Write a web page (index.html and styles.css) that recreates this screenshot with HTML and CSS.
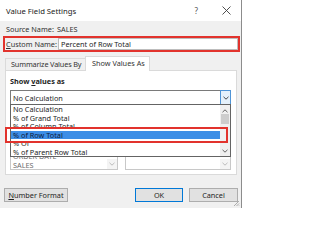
FILE: index.html
```html
<!DOCTYPE html>
<html>
<head>
<meta charset="utf-8">
<title>Value Field Settings</title>
<link rel="stylesheet" href="styles.css">
</head>
<body>
<div class="dialog">
  <div class="titlebar">
    <span class="title">Value Field Settings</span>
    <span class="help">?</span>
    <svg class="close" width="9" height="9" viewBox="0 0 9 9"><path d="M0.5 0.5 L8.5 8.5 M8.5 0.5 L0.5 8.5" stroke="#3c3c3c" stroke-width="0.9" fill="none"/></svg>
  </div>
  <div class="content">
    <div class="source"><span class="source-label">Source Name:</span><span class="source-value">SALES</span></div>
    <div class="custom">
      <span class="custom-label"><u>C</u>ustom Name:</span>
      <div class="text-input">Percent of Row Total</div>
    </div>
    <div class="tabs">
      <div class="tab">Summarize Values By</div>
      <div class="tab tab-active">Show Values As</div>
    </div>
    <div class="panel">
      <div class="group-label">Show <u>v</u>alues as</div>
      <div class="select">
        <span class="select-text">No Calculation</span>
        <span class="select-btn"><svg width="6" height="4" viewBox="0 0 6 4"><path d="M0.5 0.8 L3 3.2 L5.5 0.8" stroke="#333" stroke-width="0.9" fill="none"/></svg></span>
        <div class="droplist">
          <ul class="options">
            <li>No Calculation</li>
            <li>% of Grand Total</li>
            <li>% of Column Total</li>
            <li class="selected">% of Row Total</li>
            <li>% Of</li>
            <li>% of Parent Row Total</li>
          </ul>
          <div class="scrollbar">
            <svg width="6" height="4" viewBox="0 0 6 4"><path d="M0.5 3.2 L3 0.8 L5.5 3.2" stroke="#555" stroke-width="0.9" fill="none"/></svg>
            <div class="thumb"></div>
            <div class="track"></div>
            <svg width="6" height="4" viewBox="0 0 6 4"><path d="M0.5 0.8 L3 3.2 L5.5 0.8" stroke="#555" stroke-width="0.9" fill="none"/></svg>
          </div>
        </div>
      </div>
      <div class="bases">
        <div class="listbox">
          <div class="list-items">
            <div>ORDER DATE</div>
            <div>SALES</div>
          </div>
          <div class="list-scroll"><span class="list-arrow"><svg width="6" height="4" viewBox="0 0 6 4"><path d="M0.5 0.8 L3 3.2 L5.5 0.8" stroke="#b4b4b4" stroke-width="0.9" fill="none"/></svg></span></div>
        </div>
        <div class="listbox">
          <div class="list-items"></div>
          <div class="list-scroll"><span class="list-arrow"><svg width="6" height="4" viewBox="0 0 6 4"><path d="M0.5 0.8 L3 3.2 L5.5 0.8" stroke="#b4b4b4" stroke-width="0.9" fill="none"/></svg></span></div>
        </div>
      </div>
    </div>
    <div class="buttons">
      <button class="btn btn-format"><u>N</u>umber Format</button>
      <span class="spacer"></span>
      <button class="btn btn-ok">OK</button>
      <button class="btn btn-cancel">Cancel</button>
    </div>
  </div>
  <svg class="grip" width="7" height="7" viewBox="0 0 7 7"><path d="M6 1 L1 6 M6 3.5 L3.5 6 M6 5.5 L5.5 6" stroke="#9a9a9a" stroke-width="0.8" fill="none"/></svg>
</div>
</body>
</html>
```

FILE: styles.css
```css
* { box-sizing: border-box; }

html, body {
  margin: 0;
  padding: 0;
  background: #ffffff;
}

body {
  font-family: "Noto Sans", "Open Sans", sans-serif;
  font-size: 7.3px;
  color: #1e1e1e;
}

.dialog {
  position: relative;
  width: 242px;
  height: 208px;
  background: #f0f0f0;
  border-right: 1px solid #8c8c8c;
  overflow: hidden;
}

.titlebar {
  height: 21px;
  background: #ffffff;
  display: flex;
  align-items: center;
  padding-left: 6px;
}

.title {
  font-size: 7.7px;
  flex: 1;
  color: #1a1a1a;
  white-space: nowrap;
}

.help {
  font-size: 8px;
  color: #555;
  margin-right: 24px;
}

.close {
  margin-right: 10px;
}

.content {
  padding-top: 4px;
}

.source {
  display: flex;
  line-height: 8px;
  padding-left: 6px;
  color: #333;
  white-space: nowrap;
}

.source-label {
  width: 51px;
}

.custom {
  margin: 3px 0 0 3px;
  width: 237px;
  height: 16px;
  border: 2px solid #e2332d;
  display: flex;
  align-items: center;
  padding-left: 1px;
  white-space: nowrap;
}

.custom-label {
  width: 52px;
  color: #333;
}

.text-input {
  flex: 1;
  height: 12px;
  background: #ffffff;
  border: 1px solid #bdbdbd;
  line-height: 10px;
  padding-left: 2px;
}

.tabs {
  display: flex;
  margin-top: 4px;
  padding-left: 5px;
  height: 14px;
  align-items: flex-end;
  white-space: nowrap;
}

.tab {
  height: 12px;
  line-height: 11px;
  padding: 0 0 0 5px;
  width: 80px;
  border-top: 1px solid #dadada;
  border-left: 1px solid #dadada;
  color: #333;
  letter-spacing: -0.15px;
}

.tab-active {
  width: 65px;
  height: 15px;
  line-height: 13px;
  padding-left: 6px;
  background: #ffffff;
  border: 1px solid #dadada;
  border-bottom: none;
  margin-bottom: -1px;
  position: relative;
  z-index: 1;
  letter-spacing: 0;
}

.panel {
  margin-left: 5px;
  width: 232px;
  height: 105px;
  background: #ffffff;
  border: 1px solid #dadada;
  padding: 6px 5px 0 4px;
}

.group-label {
  font-weight: bold;
  line-height: 8px;
  color: #1e1e1e;
  white-space: nowrap;
}

.select {
  position: relative;
  margin-top: 5px;
  height: 15px;
  border: 1px solid #7a7a7a;
  display: flex;
  align-items: center;
  z-index: 2;
}

.select-text {
  flex: 1;
  padding-left: 2px;
}

.select-btn {
  width: 11px;
  height: 15px;
  margin: -1px -1px -1px 0;
  border: 1px solid #4f94d6;
  background: #e5f1fb;
  display: flex;
  align-items: center;
  justify-content: center;
}

.droplist {
  position: absolute;
  top: 100%;
  left: -1px;
  right: -1px;
  height: 53px;
  background: #ffffff;
  border: 1px solid #646464;
  display: flex;
}

.options {
  list-style: none;
  margin: 0;
  padding: 0;
  flex: 1;
}

.options li {
  height: 8.5px;
  line-height: 8.5px;
  padding-left: 2px;
  white-space: nowrap;
}

.options li.selected {
  position: relative;
  background: #3d8ee6;
  color: #0d1a3a;
}

.options li.selected::after {
  content: "";
  position: absolute;
  left: -6px;
  right: -8px;
  top: -3.5px;
  bottom: -3.5px;
  border: 2px solid #e2332d;
}

.scrollbar {
  width: 10px;
  background: #f0f0f0;
  display: flex;
  flex-direction: column;
  align-items: center;
  padding-top: 4px;
}

.thumb {
  width: 8px;
  height: 10px;
  margin-top: 1px;
  background: #cdcdcd;
}

.track {
  flex: 1;
}

.scrollbar svg:last-child {
  margin-bottom: 3px;
}

.bases {
  display: grid;
  grid-template-columns: 108px 106px;
  column-gap: 7px;
  margin-top: 12px;
}

.listbox {
  height: 53px;
  border: 1px solid #c8c8c8;
  display: flex;
  overflow: hidden;
}

.list-items {
  flex: 1;
  display: flex;
  flex-direction: column;
  justify-content: flex-end;
  color: #6d6d6d;
  padding-left: 2px;
  white-space: nowrap;
}

.list-items div {
  height: 8.5px;
  line-height: 8.5px;
}

.list-scroll {
  width: 10px;
  display: flex;
  flex-direction: column;
  justify-content: flex-end;
}

.list-arrow {
  height: 10px;
  background: #f4f4f4;
  display: flex;
  align-items: center;
  justify-content: center;
}

.buttons {
  display: flex;
  margin-top: 13px;
  padding: 0 3px 0 4px;
  height: 14px;
}

.btn {
  font-family: inherit;
  font-size: 7.3px;
  color: #1e1e1e;
  height: 14px;
  padding: 0;
  background: #e1e1e1;
  border: 1px solid #adadad;
  border-radius: 0;
  white-space: nowrap;
}

.btn-format {
  width: 64px;
}

.spacer {
  flex: 1;
}

.btn-ok {
  width: 48px;
  border-color: #0078d7;
}

.btn-cancel {
  width: 49px;
  margin-left: 6px;
}

.grip {
  position: absolute;
  right: 1px;
  bottom: 1px;
}
```
